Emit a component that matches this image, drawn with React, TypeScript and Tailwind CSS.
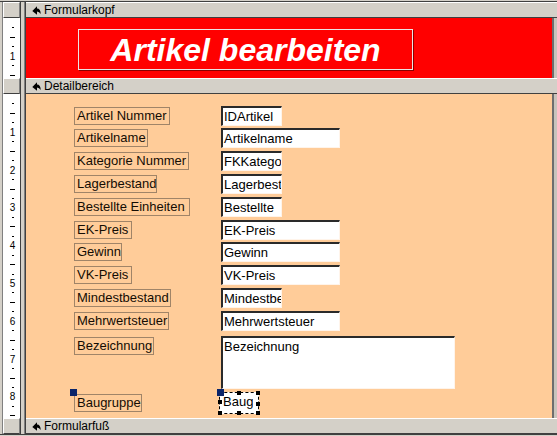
import React from 'react';

type Field = {
  label: string;
  value: string;
  labelW: string;
  boxW: string;
  rowH: string;
};

const fields: Field[] = [
  { label: 'Artikel Nummer', value: 'IDArtikel', labelW: 'w-[96px]', boxW: 'w-[61px]', rowH: 'h-[22px]' },
  { label: 'Artikelname', value: 'Artikelname', labelW: 'w-[74px]', boxW: 'w-[119px]', rowH: 'h-[23px]' },
  { label: 'Kategorie Nummer', value: 'FKKategorie', labelW: 'w-[115px]', boxW: 'w-[61px]', rowH: 'h-[23px]' },
  { label: 'Lagerbestand', value: 'Lagerbestand', labelW: 'w-[83px]', boxW: 'w-[61px]', rowH: 'h-[23px]' },
  { label: 'Bestellte Einheiten', value: 'Bestellte Einheiten', labelW: 'w-[116px]', boxW: 'w-[61px]', rowH: 'h-[23px]' },
  { label: 'EK-Preis', value: 'EK-Preis', labelW: 'w-[58px]', boxW: 'w-[119px]', rowH: 'h-[22px]' },
  { label: 'Gewinn', value: 'Gewinn', labelW: 'w-[48px]', boxW: 'w-[119px]', rowH: 'h-[23px]' },
  { label: 'VK-Preis', value: 'VK-Preis', labelW: 'w-[58px]', boxW: 'w-[119px]', rowH: 'h-[23px]' },
  { label: 'Mindestbestand', value: 'Mindestbestand', labelW: 'w-[97px]', boxW: 'w-[61px]', rowH: 'h-[23px]' },
  { label: 'Mehrwertsteuer', value: 'Mehrwertsteuer', labelW: 'w-[95px]', boxW: 'w-[119px]', rowH: 'h-[25px]' },
];

// Lineal links: alle 1/4 cm ein Strich, volle cm mit Zahl
const Ruler: React.FC<{ height: number }> = ({ height }) => {
  const step = 37.8 / 4;
  const marks: React.ReactNode[] = [];
  for (let k = 1; k * step < height - 2; k++) {
    const y = Math.round(k * step);
    if (k % 4 === 0) {
      marks.push(
        <text key={k} x={9.5} y={y + 4} fontSize={10} textAnchor="middle" fill="#000" fontFamily="Liberation Sans, Arial, sans-serif">
          {k / 4}
        </text>
      );
    } else if (k % 2 === 0) {
      marks.push(<rect key={k} x={7} y={y} width={5} height={1} fill="#000" />);
    } else {
      marks.push(<rect key={k} x={9} y={y} width={2} height={1} fill="#000" />);
    }
  }
  return (
    <svg width={17} height={height} className="block bg-white">
      {marks}
    </svg>
  );
};

const Gutter: React.FC<{ children: React.ReactNode }> = ({ children }) => (
  <div className="flex h-full w-[26px] shrink-0">
    <div className="w-[2px] bg-[#d4d0c8]" />
    <div className="w-px bg-[#808080]" />
    <div className="w-[17px]">{children}</div>
    <div className="w-px bg-[#404040]" />
    <div className="w-[3px] bg-[#d4d0c8]" />
    <div className="w-px bg-[#808080]" />
    <div className="w-px bg-[#404040]" />
  </div>
);

const SectionIcon = () => (
  <svg width="9" height="9" viewBox="0 0 9 9" className="shrink-0">
    <path d="M0.3 5 L5 0.3 L5 2.4 Q8.7 2.4 8.7 8 Q7.2 5.4 5 5.4 L5 8.7 Z" fill="#000" />
  </svg>
);

const SectionBar: React.FC<{ title: string }> = ({ title }) => (
  <div className="flex h-[16px]">
    <Gutter>
      <div className="h-full border-t border-l border-white border-b border-r border-b-[#404040] border-r-[#808080] bg-[#d4d0c8]" />
    </Gutter>
    <div className="flex flex-1 items-center gap-[3px] border-t border-b border-t-white border-b-[#404040] bg-[#d4d0c8] pl-[6px] text-[12px] leading-none text-black">
      <SectionIcon />
      <span>{title}</span>
    </div>
  </div>
);

const Label: React.FC<{ text: string; w: string }> = ({ text, w }) => (
  <div className={`${w} mt-[1px] h-[18px] shrink-0 border border-[#a08468] pl-[2px] text-[13px] leading-[16px] whitespace-nowrap text-[#140c04]`}>
    {text}
  </div>
);

const TextBox: React.FC<{ text: string; w: string }> = ({ text, w }) => (
  <div
    className={`${w} h-[20px] overflow-hidden border-t-2 border-l-2 border-b border-r border-t-[#2a2a2a] border-l-[#2a2a2a] border-b-[#fff4ea] border-r-[#fff4ea] bg-white pl-[1px] text-[13px] leading-[17px] text-black`}
  >
    {text}
  </div>
);

const Handle: React.FC<{ className: string }> = ({ className }) => (
  <div className={`absolute h-[4px] w-[4px] bg-black ${className}`} />
);

export default function App() {
  return (
    <div className="flex h-[436px] w-[557px] flex-col overflow-hidden bg-[#d4d0c8] font-['Liberation_Sans',Arial,sans-serif]">
      <div className="h-[2px] shrink-0 border-b border-[#404040] bg-[#d4d0c8]" />

      <SectionBar title="Formularkopf" />

      {/* Formularkopf */}
      <div className="flex h-[60px] shrink-0">
        <Gutter>
          <Ruler height={60} />
        </Gutter>
        <div className="w-[526px] bg-[#ff0000] pl-[52px] pt-[11px]">
          <div className="flex h-[41px] w-[335px] items-center justify-center border border-[#ece4e4] shadow-[1px_1px_0_#8a0000] text-[32px] font-bold italic leading-none text-white">
            Artikel bearbeiten
          </div>
        </div>
        <div className="flex-1 border-l-2 border-[#6e6e6e] bg-[#c8c4bc]" />
      </div>

      <SectionBar title="Detailbereich" />

      {/* Detailbereich */}
      <div className="flex h-[324px] shrink-0">
        <Gutter>
          <Ruler height={324} />
        </Gutter>
        <div className="flex w-[526px] flex-col bg-[#ffcc99] pt-[12px]">
          {fields.map((f) => (
            <div key={f.label} className={`flex ${f.rowH} items-start pl-[48px]`}>
              <div className="w-[147px] shrink-0">
                <Label text={f.label} w={f.labelW} />
              </div>
              <TextBox text={f.value} w={f.boxW} />
            </div>
          ))}

          <div className="flex h-[57px] items-start pl-[48px]">
            <div className="w-[147px] shrink-0">
              <Label text="Bezeichnung" w="w-[80px]" />
            </div>
            <div className="h-[53px] w-[234px] overflow-hidden border-t-2 border-l-2 border-b border-r border-t-[#2a2a2a] border-l-[#2a2a2a] border-b-[#fff4ea] border-r-[#fff4ea] bg-white pl-[1px] text-[13px] leading-[17px] text-black">
              Bezeichnung
            </div>
          </div>

          <div className="flex items-start pl-[48px]">
            <div className="w-[147px] shrink-0">
              <div className="relative w-fit">
                <Label text="Baugruppe" w="w-[68px]" />
                <div className="absolute -left-[4px] -top-[5px] h-[7px] w-[7px] bg-[#0a246a]" />
              </div>
            </div>
            <div className="relative -ml-[2px] -mt-[1px] h-[22px] w-[40px] border border-dashed border-black bg-white pl-[3px] text-[13px] leading-[18px] text-black">
              <div className="w-[30px] overflow-hidden whitespace-nowrap">Baugruppe</div>
              <div className="absolute -left-[3px] -top-[4px] h-[7px] w-[7px] bg-[#0a246a]" />
              <Handle className="left-[17px] -top-[2px]" />
              <Handle className="-right-[2px] -top-[2px]" />
              <Handle className="-left-[2px] top-[7px]" />
              <Handle className="-right-[2px] top-[9px]" />
              <Handle className="-left-[2px] -bottom-[2px]" />
              <Handle className="left-[17px] -bottom-[2px]" />
              <Handle className="-right-[2px] -bottom-[2px]" />
            </div>
          </div>
        </div>
        <div className="flex-1 border-l-2 border-[#6e6e6e] bg-[#c8c4bc]" />
      </div>

      <SectionBar title="Formularfuß" />
      <div className="flex-1 border-t border-[#404040] bg-[#d4d0c8]" />
    </div>
  );
}
